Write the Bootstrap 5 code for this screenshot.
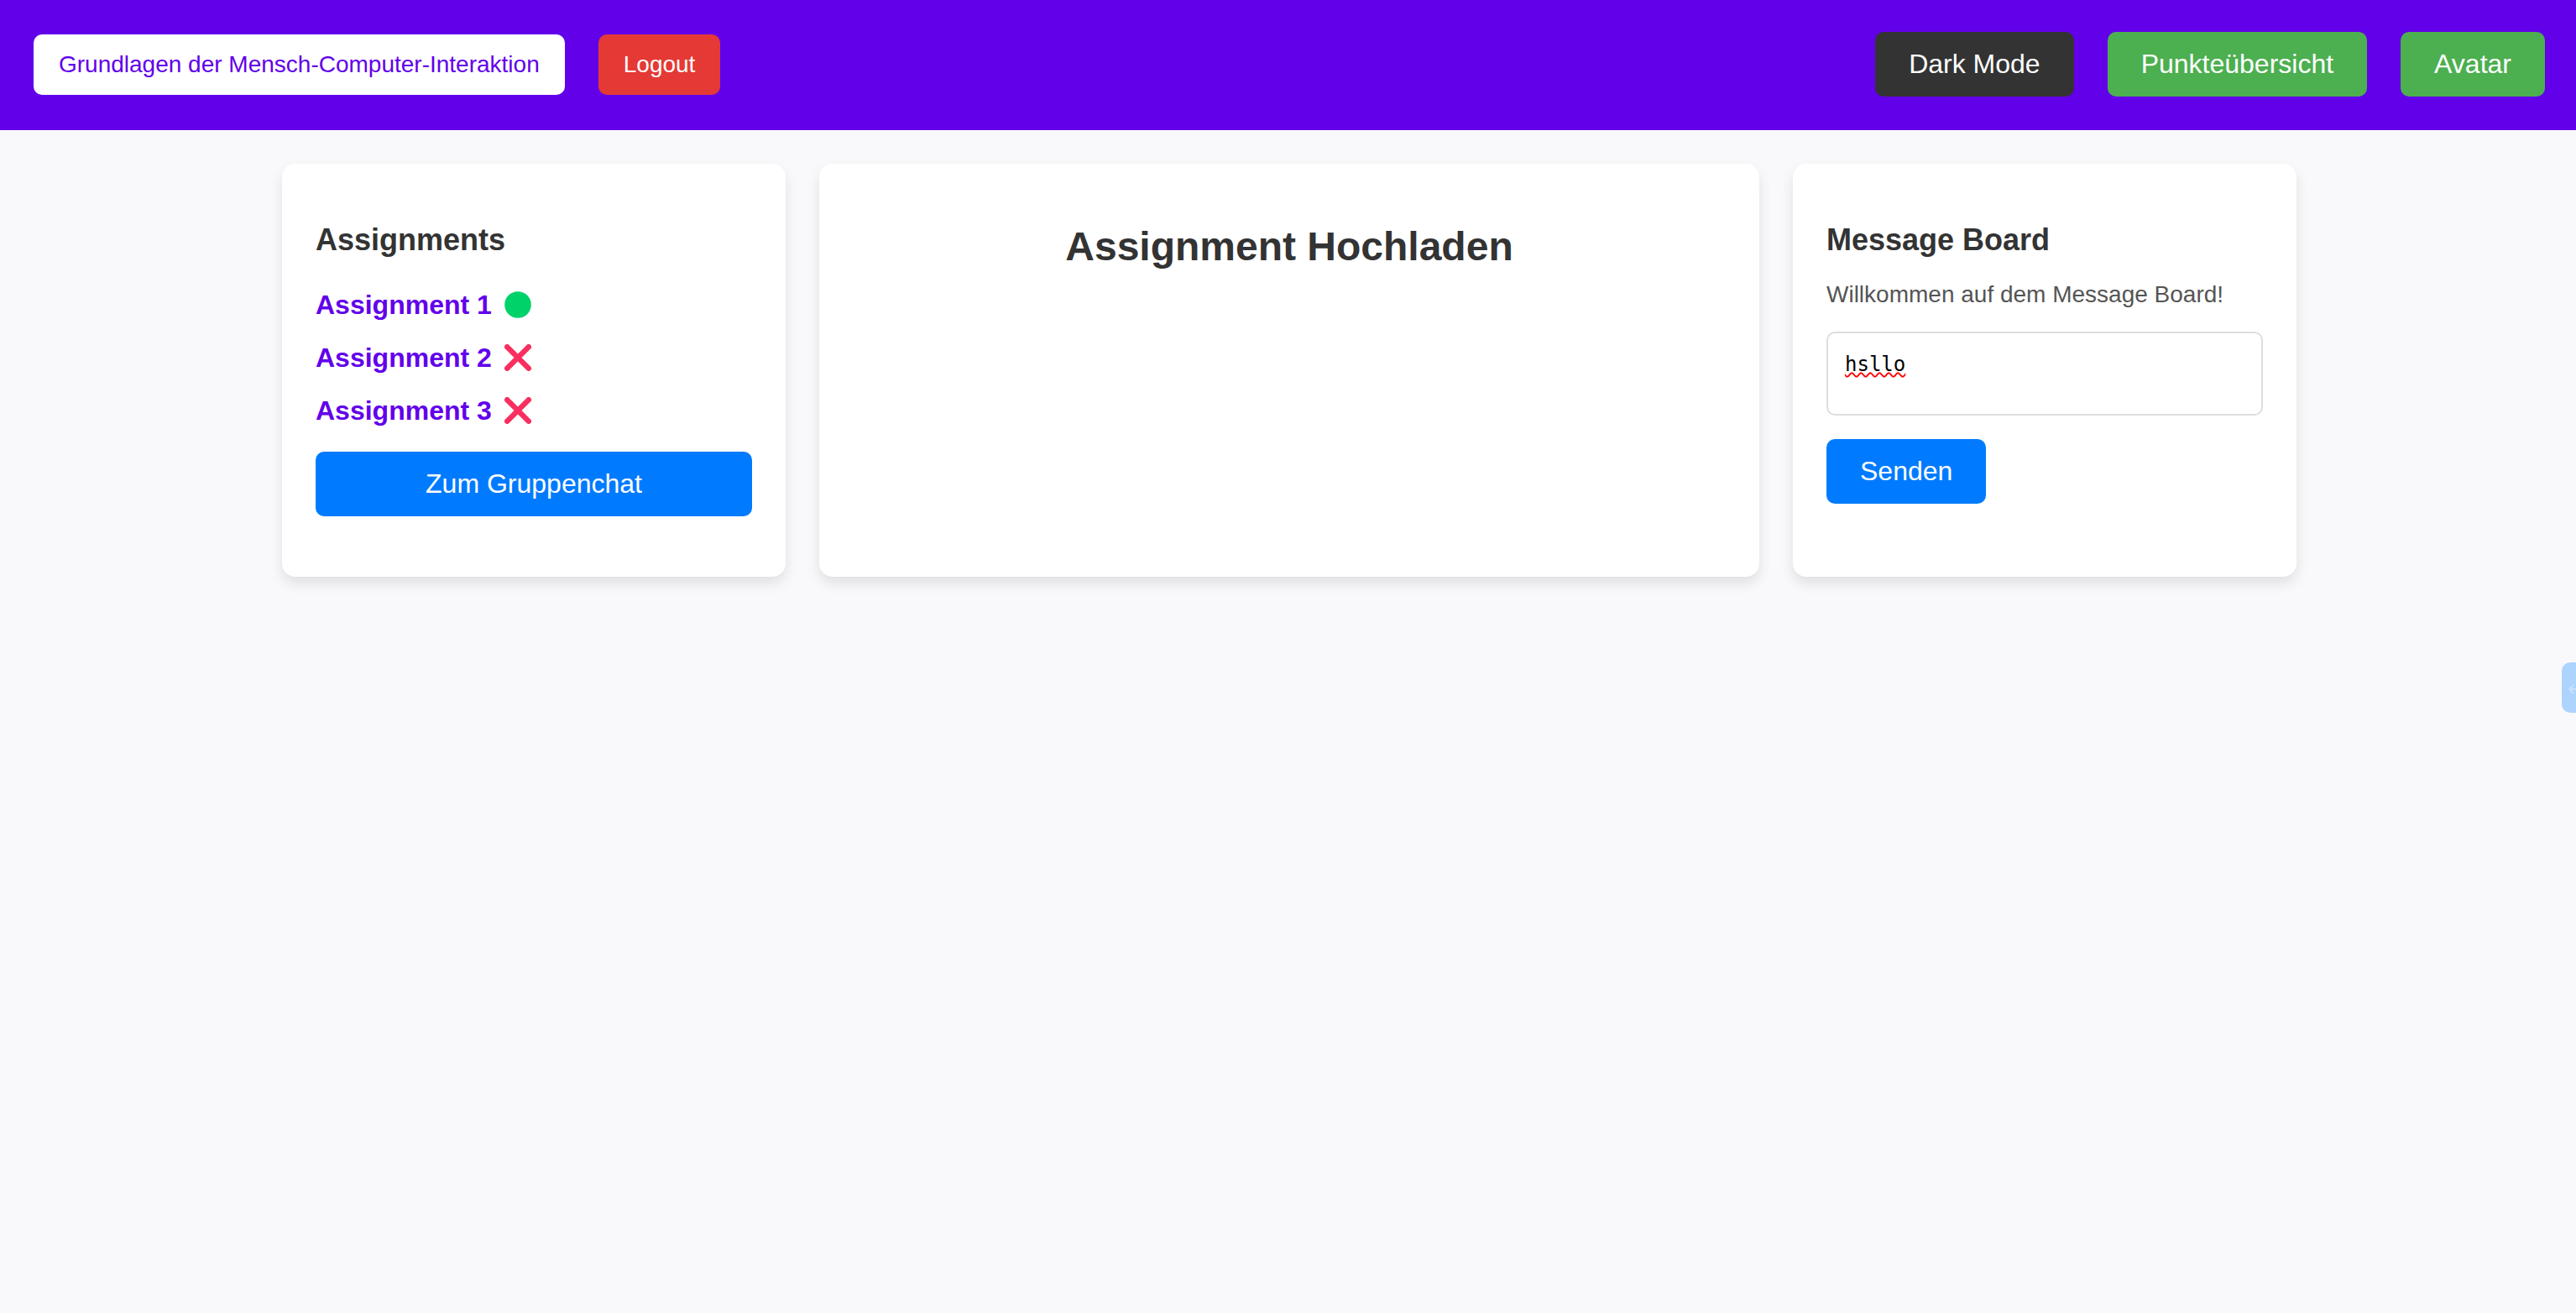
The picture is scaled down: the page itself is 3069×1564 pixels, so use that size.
<!DOCTYPE html>
<html lang="de">
<head>
<meta charset="utf-8">
<meta name="viewport" content="width=device-width, initial-scale=1">
<title>Grundlagen der Mensch-Computer-Interaktion</title>
<link href="https://cdn.jsdelivr.net/npm/bootstrap@5.3.0/dist/css/bootstrap.min.css" rel="stylesheet">
<style>
  body { background: #f9f9fc; color: #333; font-family: "Liberation Sans", Arial, sans-serif; font-size: 28px; line-height: 32px; }
  .topbar { background: #6200ea; padding: 38px 37px 40px 40px; gap: 40px; }
  .topbar-group { gap: 40px; }
  .btn { border: 0; border-radius: 10px; padding: 20px 40px; font-size: 32px; line-height: 37px; color: #fff; }
  .btn-compact { padding: 20px 30px; font-size: 28px; line-height: 32px; }
  .btn-course { background: #fff; color: #6200ea; }
  .btn-logout { background: #e53935; }
  .btn-dark-mode { background: #333; }
  .btn-green { background: #4caf50; }
  .btn-blue { background: #007bff; }
  .board { max-width: 2403px; padding: 40px 0 40px 3px; }
  .board-inner { gap: 40px; }
  .panel { background: #fff; border-radius: 16px; padding: 70px 40px 72px; box-shadow: 0 8px 16px rgba(0, 0, 0, .1); }
  .panel-side { flex: 0 0 25%; width: 25%; }
  .panel h1 { font-size: 48px; line-height: 58px; font-weight: 700; margin: 0; }
  .panel h2 { font-size: 36px; line-height: 42px; font-weight: 700; margin: 0 0 28px; }
  .task-list { gap: 20px; margin: 34px 0 28px; }
  .task-list li { gap: 15px; height: 43px; }
  .task-list a { color: #6200ea; font-size: 32px; line-height: 42px; font-weight: 700; text-decoration: none; }
  .panel .intro { color: #555; margin: 0 0 28px; }
  .message-box { display: block; width: 100%; height: 100px; resize: none; overflow: hidden; border: 2px solid #ddd; border-radius: 10px; padding: 20px; margin-bottom: 28px; color: #000; font: 24px/34px "DejaVu Sans Mono", monospace; text-decoration: underline wavy #f00 2px; text-decoration-skip-ink: none; }
  .side-tab { position: fixed; right: 0; top: 789px; width: 17px; height: 60px; padding: 4px 0 0 8px; border: 0; border-radius: 10px 0 0 10px; background: #add3ff; overflow: hidden; }
</style>
<script src="https://cdn.jsdelivr.net/npm/bootstrap@5.3.0/dist/js/bootstrap.bundle.min.js"></script>
</head>
<body>
<header class="topbar d-flex flex-wrap justify-content-between align-items-center">
  <div class="topbar-group d-flex align-items-center">
    <button type="button" class="btn btn-compact btn-course">Grundlagen der Mensch-Computer-Interaktion</button>
    <button type="button" class="btn btn-compact btn-logout">Logout</button>
  </div>
  <div class="topbar-group d-flex align-items-center">
    <button type="button" class="btn btn-dark-mode">Dark Mode</button>
    <button type="button" class="btn btn-green">Punkteübersicht</button>
    <button type="button" class="btn btn-green">Avatar</button>
  </div>
</header>

<main class="board mx-auto">
  <div class="board-inner d-flex align-items-stretch">
    <section class="panel panel-side">
      <h2>Assignments</h2>
      <ul class="task-list list-unstyled d-flex flex-column">
        <li class="d-flex align-items-center"><a href="#a1">Assignment 1</a>
          <svg width="32" height="32" viewBox="0 0 32 32" role="img" aria-label="Erledigt"><circle cx="16" cy="16" r="15.8" fill="#00d26a"/></svg></li>
        <li class="d-flex align-items-center"><a href="#a2">Assignment 2</a>
          <svg width="32" height="32" viewBox="0 0 32 32" role="img" aria-label="Offen"><path d="M3.2 3.2L28.8 28.8M28.8 3.2L3.2 28.8" stroke="#f92f60" stroke-width="6.4" stroke-linecap="round"/></svg></li>
        <li class="d-flex align-items-center"><a href="#a3">Assignment 3</a>
          <svg width="32" height="32" viewBox="0 0 32 32" role="img" aria-label="Offen"><path d="M3.2 3.2L28.8 28.8M28.8 3.2L3.2 28.8" stroke="#f92f60" stroke-width="6.4" stroke-linecap="round"/></svg></li>
      </ul>
      <button type="button" class="btn btn-blue w-100">Zum Gruppenchat</button>
    </section>

    <section class="panel flex-grow-1 text-center">
      <h1>Assignment Hochladen</h1>
    </section>

    <section class="panel panel-side">
      <h2>Message Board</h2>
      <p class="intro">Willkommen auf dem Message Board!</p>
      <textarea class="message-box" aria-label="Nachricht" spellcheck="false">hsllo</textarea>
      <button type="button" class="btn btn-blue">Senden</button>
    </section>
  </div>
</main>

<button type="button" class="side-tab d-flex align-items-center" aria-label="Seitenleiste öffnen">
  <svg class="flex-shrink-0" width="16" height="12" viewBox="0 0 16 12" fill="none" stroke="#c8e1ff" stroke-width="2"><path d="M6 1L1 6L6 11M1 6H16"/></svg>
</button>
</body>
</html>
